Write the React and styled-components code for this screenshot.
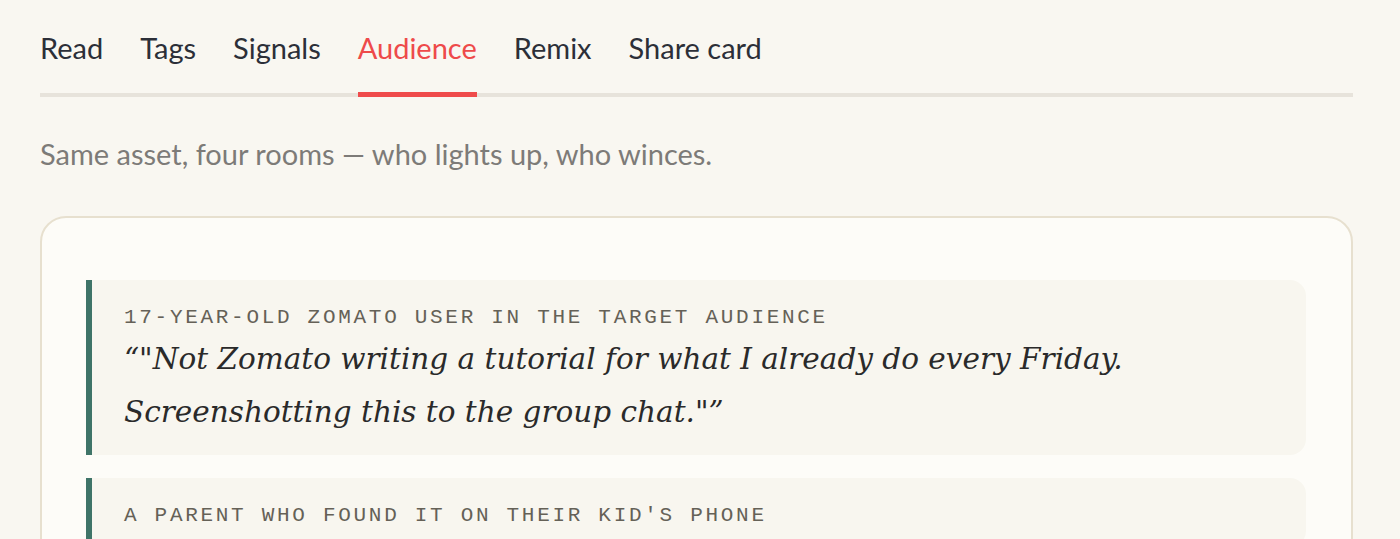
import styled, { createGlobalStyle } from "styled-components";

const GlobalStyle = createGlobalStyle`
  * { box-sizing: border-box; }
  body {
    margin: 0;
    background: #f9f7f1;
    font-family: "Lato", "Noto Sans", sans-serif;
  }
`;

const tabs = ["Read", "Tags", "Signals", "Audience", "Remix", "Share card"];

const reactions = [
  {
    who: "17-year-old Zomato user in the target audience",
    quote:
      "\u201C\"Not Zomato writing a tutorial for what I already do every Friday. Screenshotting this to the group chat.\"\u201D",
  },
  {
    who: "A parent who found it on their kid's phone",
    quote: "",
  },
];

export default function App() {
  return (
    <>
      <GlobalStyle />
      <Page>
        <TabBar>
          {tabs.map((t) => (
            <Tab key={t} $active={t === "Audience"}>
              {t}
            </Tab>
          ))}
        </TabBar>
        <Lead>Same asset, four rooms — who lights up, who winces.</Lead>
        <Card>
          {reactions.map((r) => (
            <Reaction key={r.who}>
              <Who>{r.who}</Who>
              {r.quote && <Quote>{r.quote}</Quote>}
            </Reaction>
          ))}
        </Card>
      </Page>
    </>
  );
}

const Page = styled.div`
  padding: 22px 47px 0 40px;
  height: 539px;
  overflow: hidden;
`;

const TabBar = styled.nav`
  display: flex;
  gap: 37px;
  border-bottom: 4px solid #e7e3db;
`;

const Tab = styled.button`
  all: unset;
  position: relative;
  font-family: "Lato", sans-serif;
  font-size: 29px;
  line-height: 52px;
  padding-bottom: 19px;
  color: ${(p) => (p.$active ? "#ee4a4a" : "#2c2f38")};
  cursor: pointer;

  &::after {
    content: "";
    position: absolute;
    left: 0;
    right: 0;
    bottom: -4px;
    height: 5px;
    background: ${(p) => (p.$active ? "#ef4b4b" : "transparent")};
  }
`;

const Lead = styled.p`
  margin: 39px 0 44px;
  font-size: 29px;
  line-height: 36px;
  color: #7d7b78;
`;

const Card = styled.section`
  background: #fdfcf8;
  border: 2px solid #e7e0cf;
  border-radius: 26px;
  padding: 62px 45px 40px 44px;
  display: flex;
  flex-direction: column;
  gap: 23px;
`;

const Reaction = styled.div`
  background: #f8f6ef;
  border-left: 6px solid #3f7468;
  border-radius: 0 16px 16px 0;
  padding: 23px 32px 16px;
`;

const Who = styled.div`
  font-family: "Liberation Mono", "DejaVu Sans Mono", monospace;
  font-size: 21px;
  letter-spacing: 2.7px;
  text-transform: uppercase;
  color: #656157;
  line-height: 30px;
`;

const Quote = styled.p`
  margin: 0;
  font-family: "DejaVu Serif", "Liberation Serif", serif;
  font-style: italic;
  font-size: 29.5px;
  line-height: 53px;
  color: #2a2a2a;
`;
